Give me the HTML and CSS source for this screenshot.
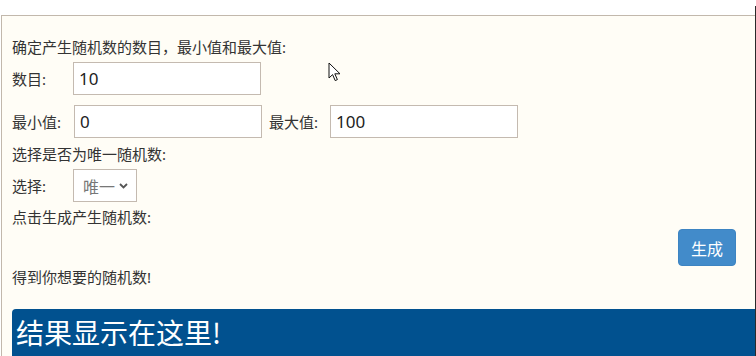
FILE: index.html
```html
<!DOCTYPE html>
<html lang="zh-CN">
<head>
    <meta charset="UTF-8">
    <meta name="viewport" content="width=device-width, initial-scale=1.0">
    <title>随机数生成器</title>
    <link rel="stylesheet" href="styles.css">
</head>
<body>

<div class="frame">
    <div class="generator">
        <p class="hint">确定产生随机数的数目，最小值和最大值:</p>
        <div class="row">
            <label class="label" for="count">数目:</label>
            <input type="text" id="count" value="10">
        </div>
        <div class="row row-gap">
            <label class="label label-min" for="min">最小值:</label>
            <input type="text" id="min" value="0">
            <label class="label label-max" for="max">最大值:</label>
            <input type="text" id="max" value="100">
        </div>
        <p class="hint hint-unique">选择是否为唯一随机数:</p>
        <div class="row">
            <label class="label" for="unique">选择:</label>
            <div class="select-wrap">
                <select id="unique">
                    <option value="1">唯一</option>
                    <option value="0">可重复</option>
                </select>
                <svg class="chevron" width="9" height="6" viewBox="0 0 9 6"><path d="M1 1l3.5 3.5L8 1" fill="none" stroke="#555" stroke-width="1.8"/></svg>
            </div>
        </div>
        <p class="hint">点击生成产生随机数:</p>
        <div class="actions">
            <button onclick="generate()">生成</button>
        </div>
        <p class="hint hint-result">得到你想要的随机数!</p>
        <h1 class="result" id="result">结果显示在这里!</h1>
    </div>
    <svg class="cursor" width="13" height="20" viewBox="0 0 13 20"><path d="M1 1v15l3.6-3.4 2.6 6 2.2-1-2.6-5.8H12z" fill="#fff" stroke="#111" stroke-width="1"/></svg>
</div>

<script>
    function generate() {
        const count = parseInt(document.getElementById('count').value);
        const min = parseInt(document.getElementById('min').value);
        const max = parseInt(document.getElementById('max').value);
        const unique = document.getElementById('unique').value === '1';
        const result = document.getElementById('result');

        if (isNaN(count) || isNaN(min) || isNaN(max) || min > max) {
            result.textContent = '请输入有效的数字!';
            return;
        }
        if (unique && count > max - min + 1) {
            result.textContent = '范围内的数字不够!';
            return;
        }

        const nums = [];
        while (nums.length < count) {
            const n = Math.floor(Math.random() * (max - min + 1)) + min;
            if (unique && nums.includes(n)) continue;
            nums.push(n);
        }
        result.textContent = nums.join(', ');
    }
</script>

</body>
</html>
```

FILE: styles.css
```css
html {
    overflow: hidden;
    background: #fff;
}
body {
    margin: 0;
    font-family: "Noto Sans", "Noto Sans CJK SC", sans-serif;
    font-size: 15px;
    color: #333;
}
.frame {
    position: relative;
    box-sizing: border-box;
    height: calc(100vh - 6px);
    margin-top: 6px;
    padding-top: 9px;
    border-right: 1px solid #2a2a2a;
}
.generator {
    box-sizing: border-box;
    height: 100%;
    margin-left: 1px;
    padding: 21px 0 0 10px;
    border-top: 1px solid #c2b8ac;
    border-left: 1px solid #c2b8ac;
    background: #fffdf6;
    overflow: hidden;
}
.hint {
    margin: 0;
    line-height: 20px;
}
.hint-unique {
    margin-top: 6px;
}
.row {
    display: flex;
    align-items: center;
    margin-top: 5px;
    margin-bottom: 5px;
}
.row-gap {
    margin-top: 10px;
}
.label {
    width: 61px;
    line-height: 20px;
}
.label-min {
    width: 62px;
}
.label-max {
    width: 61px;
    margin-left: 7px;
}
.row input {
    box-sizing: border-box;
    width: 188px;
    height: 33px;
    padding: 0 5px;
    border: 1px solid #c4bab0;
    background: #fff;
    font-family: "Noto Sans", sans-serif;
    font-size: 17px;
    color: #222;
    outline: none;
}
.select-wrap {
    position: relative;
}
.select-wrap select {
    appearance: none;
    -webkit-appearance: none;
    box-sizing: border-box;
    width: 64px;
    height: 33px;
    padding: 0 0 0 9px;
    border: 1px solid #c4bab0;
    border-radius: 0;
    background: #fff;
    font-family: "Noto Sans CJK SC", sans-serif;
    font-size: 16px;
    color: #777;
    outline: none;
}
.chevron {
    position: absolute;
    right: 9px;
    top: 14px;
    pointer-events: none;
}
.actions {
    display: flex;
    justify-content: flex-end;
    margin-top: 2px;
    padding-right: 19px;
}
.actions button {
    box-sizing: border-box;
    width: 58px;
    height: 37px;
    border: 1px solid #3d84c2;
    border-radius: 4px;
    background: #428bca;
    color: #fff;
    font-family: "Noto Sans CJK SC", sans-serif;
    font-size: 16px;
    cursor: pointer;
}
.hint-result {
    margin-top: 1px;
}
.result {
    margin: 22px 0 0;
    padding: 3px 0 4px 4px;
    border-radius: 4px 0 0 0;
    background: #01518f;
    color: #fff;
    font-family: "Noto Sans CJK SC", sans-serif;
    font-size: 28px;
    font-weight: normal;
    line-height: 40px;
}
.cursor {
    position: absolute;
    left: 328px;
    top: 56px;
}
```
